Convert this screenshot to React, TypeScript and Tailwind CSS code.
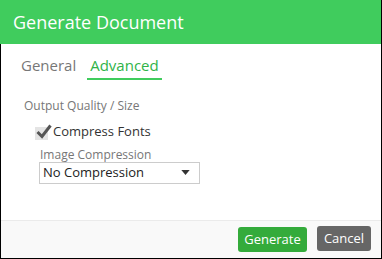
import { useState } from 'react'

export default function App() {
  const [tab, setTab] = useState<'general' | 'advanced'>('advanced')
  const [compress, setCompress] = useState(true)

  return (
    <div className="h-[259px] w-[382px] border-r border-b border-black bg-white font-['Open_Sans',sans-serif]">
      <div className="flex h-[44px] items-center bg-[#40cc5d] pl-[13px]">
        <h1 className="text-[18px] text-white">Generate Document</h1>
      </div>
      <div className="flex h-[214px] flex-col border-l border-black">
        <div className="flex h-[40px] gap-[10px] pl-[19px] pt-[10px] text-[15px]">
          <button
            className={tab === 'general' ? 'flex h-[26px] items-start border-b-2 border-[#40cc5d] px-[3px] leading-[22px] text-[#2fb348]' : 'flex h-[26px] items-start px-[1px] leading-[22px] text-[#777]'}
            onClick={() => setTab('general')}
          >
            General
          </button>
          <button
            className={tab === 'advanced' ? 'flex h-[26px] items-start border-b-2 border-[#40cc5d] px-[3px] leading-[22px] text-[#2fb348]' : 'flex h-[26px] items-start px-[3px] leading-[22px] text-[#777]'}
            onClick={() => setTab('advanced')}
          >
            Advanced
          </button>
        </div>
        <div className="flex-1 pl-[23px] pt-[13px]">
          <div className="text-[12px] text-[#777]">Output Quality / Size</div>
          <label className="mt-[7px] ml-[11px] flex items-center gap-[5px] text-[13px] text-[#333]">
            <span className="relative mt-[3px] h-[13px] w-[13px] bg-[#e4e4e4]" onClick={() => setCompress(!compress)}>
              {compress && (
                <svg viewBox="0 0 18 18" className="absolute -left-px -top-[4px] h-[18px] w-[18px]">
                  <path d="M3.5 9 L8 13.5 L16.5 2.5" fill="none" stroke="#555" strokeWidth="3" />
                </svg>
              )}
            </span>
            Compress Fonts
          </label>
          <div className="mt-[6px] ml-[16px] text-[12px] leading-[14px] text-[#777]">Image Compression</div>
          <div className="ml-[15px] flex h-[22px] w-[161px] items-center justify-between border border-[#ccc] pl-[3px] pr-[9px] text-[13px] text-[#222]">
            <span>No Compression</span>
            <svg viewBox="0 0 10 6" className="h-[5px] w-[9px]">
              <path d="M0 0 H10 L5 6 Z" fill="#333" />
            </svg>
          </div>
        </div>
        <div className="flex h-[38px] items-center justify-end gap-[10px] border-t border-[#ebebeb] bg-[#f9f9f9] pr-[10px]">
          <button className="h-[25px] w-[69px] rounded-[3px] bg-[#34ab3b] text-[13px] text-white">Generate</button>
          <button className="mb-[2px] h-[25px] w-[54px] rounded-[3px] bg-[#666] text-[13px] text-white">Cancel</button>
        </div>
      </div>
    </div>
  )
}
